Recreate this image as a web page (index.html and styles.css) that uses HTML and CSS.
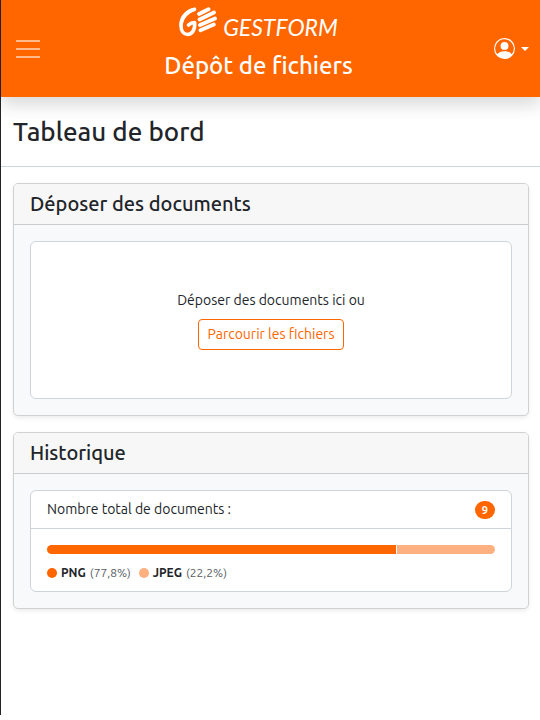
FILE: index.html
```html
<!DOCTYPE html>
<html lang="fr">
<head>
<meta charset="utf-8">
<meta name="viewport" content="width=device-width, initial-scale=1">
<title>Gestform - Dépôt de fichiers</title>
<link rel="stylesheet" href="styles.css">
</head>
<body>
<div class="app">
  <header class="navbar">
    <button class="icon-button" type="button" aria-label="Menu">
      <svg width="30" height="30" viewBox="0 0 30 30"><path d="M3 7h24M3 15h24M3 23h24" fill="none" stroke="currentColor" stroke-opacity=".55" stroke-width="2"/></svg>
    </button>
    <div class="brand">
      <a class="logo" href="#">
        <svg width="38" height="30" viewBox="0 0 38 30" fill="none" stroke="#fff" stroke-linecap="round" stroke-linejoin="round" aria-hidden="true">
          <path d="M15.500 2.300C7.500 4 2 11 2 18.500C2 24.500 5 27.500 8.500 27.500C13 27.500 16.300 23 15.600 15.500Q12 15.500 9.500 18" stroke-width="3.600"/>
          <path d="M14 1C6 3 0 10 0.500 19L4 17C5 11 9 6.500 16 4Z" fill="#fff" stroke="none"/>
          <path d="M20 7L29.500 2.200M20.500 12.500L35 5.500M21 18L36 11.500M21.500 23.200L34.800 17.500" stroke-width="3.800"/>
        </svg>
        <span class="wordmark">GESTFORM</span>
      </a>
      <span class="subtitle">Dépôt de fichiers</span>
    </div>
    <button class="icon-button account" type="button" aria-label="Compte">
      <svg width="21" height="21" viewBox="0 0 16 16" fill="currentColor"><path d="M11 6a3 3 0 1 1-6 0 3 3 0 0 1 6 0z"/><path fill-rule="evenodd" d="M0 8a8 8 0 1 1 16 0A8 8 0 0 1 0 8zm8-7a7 7 0 0 0-5.468 11.370C3.242 11.226 4.805 10 8 10s4.757 1.225 5.468 2.370A7 7 0 0 0 8 1z"/></svg>
      <span class="caret"></span>
    </button>
  </header>
  <main>
    <h1 class="page-title">Tableau de bord</h1>
    <div class="cards">
      <section class="card">
        <h2 class="card-header">Déposer des documents</h2>
        <div class="card-body">
          <div class="panel dropzone">
            <span>Déposer des documents ici ou</span>
            <button class="browse" type="button">Parcourir les fichiers</button>
          </div>
        </div>
      </section>
      <section class="card">
        <h2 class="card-header">Historique</h2>
        <div class="card-body">
          <div class="panel">
            <div class="total"><span>Nombre total de documents :</span><span class="badge">9</span></div>
            <div class="stats">
              <div class="bar"><span class="segment png" style="width:77.8%"></span><span class="segment jpeg"></span></div>
              <ul class="legend">
                <li><span class="dot png"></span><strong>PNG</strong> <span class="share">(77,8%)</span></li>
                <li><span class="dot jpeg"></span><strong>JPEG</strong> <span class="share">(22,2%)</span></li>
              </ul>
            </div>
          </div>
        </div>
      </section>
    </div>
  </main>
</div>
</body>
</html>
```
FILE: styles.css
```css
* { box-sizing: border-box; }

body {
  margin: 0;
  background: #fff;
  color: #212529;
  font: 14px/21px Ubuntu, "Noto Sans", sans-serif;
}

button { font: inherit; cursor: pointer; }

.app {
  min-height: 715px;
  border-left: 1px solid #222327;
}

.navbar {
  display: flex;
  align-items: center;
  justify-content: space-between;
  padding: 0 11px 0 12px;
  background: #f60;
  color: #fff;
  box-shadow: 0 8px 16px rgba(0, 0, 0, .15);
}

.icon-button {
  display: flex;
  align-items: center;
  padding: 0;
  border: 0;
  background: none;
  color: inherit;
}

.account {
  gap: 6px;
  padding-left: 20px;
}

.caret {
  border-top: 4px solid;
  border-right: 4px solid transparent;
  border-left: 4px solid transparent;
}

.brand {
  display: flex;
  flex-direction: column;
  align-items: center;
  padding: 4px 0 10px;
}

.logo {
  display: flex;
  align-items: center;
  gap: 6px;
  height: 41px;
  color: #fff;
  text-decoration: none;
}

.logo svg { margin-bottom: 6px; }

.wordmark {
  padding-top: 4px;
  font: italic 23px/32px Lato, sans-serif;
}

.subtitle {
  font-size: 24px;
  font-weight: 550;
  line-height: 42px;
}

.page-title {
  margin: 0;
  padding: 16px 12px;
  border-bottom: 1px solid #ced4da;
  font-size: 26px;
  font-weight: 550;
  line-height: 37px;
}

.cards {
  display: grid;
  gap: 16px;
  padding: 16px 11px 16px 12px;
}

.card {
  overflow: hidden;
  border: 1px solid #d0d1d3;
  border-radius: 5px;
  background: #f8f9fa;
  box-shadow: 0 2px 4px rgba(0, 0, 0, .075);
}

.card-header {
  margin: 0;
  padding: 8px 16px;
  border-bottom: 1px solid #cbcccd;
  background: #f7f7f7;
  font-size: 20px;
  font-weight: 550;
  line-height: 24px;
}

.card-body { padding: 16px; }

.panel {
  border: 1px solid #ced4da;
  border-radius: 6px;
  background: #fff;
}

.dropzone {
  display: flex;
  flex-direction: column;
  align-items: center;
  gap: 8px;
  padding: 48px 16px;
}

.browse {
  padding: 4px 8px;
  border: 1px solid #f60;
  border-radius: 4px;
  background: #fff;
  color: #f60;
}

.total {
  display: flex;
  align-items: center;
  justify-content: space-between;
  padding: 8px 16px;
  border-bottom: 1px solid #ced4da;
}

.badge {
  padding: 3px 7px;
  border-radius: 9px;
  background: #f60;
  color: #fff;
  font-size: 11px;
  font-weight: 700;
  line-height: 12px;
}

.stats { padding: 16px 16px 9px; }

.bar {
  display: flex;
  gap: 1px;
  height: 9px;
  margin-bottom: 10px;
  overflow: hidden;
  border-radius: 5px;
}

.png { background: #f60; }
.jpeg { background: #ffb080; }
.segment.jpeg { flex: 1; }

.legend {
  display: flex;
  gap: 8px;
  margin: 0;
  padding: 0;
  font-size: 12px;
  line-height: 18px;
  list-style: none;
}

.legend li {
  display: flex;
  align-items: center;
  gap: 4px;
}

.dot {
  width: 10px;
  height: 10px;
  border-radius: 50%;
}

.share { color: #595c5f; }
```
